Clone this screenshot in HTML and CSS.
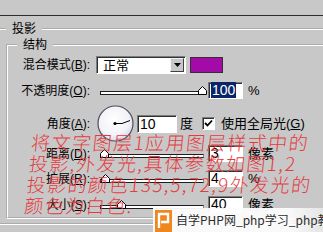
FILE: index.html
```html
<!DOCTYPE html>
<html lang="zh">
<head>
<meta charset="utf-8">
<title>投影</title>
<link rel="stylesheet" href="styles.css">
</head>
<body>
<div class="topbar"></div>
<fieldset class="outer">
  <legend>投影</legend>
  <fieldset class="inner">
    <legend>结构</legend>
    <div class="rows">
      <div class="row row-first">
        <span class="lbl">混合模式(<u>B</u>):</span>
        <div class="select"><span class="select-text">正常</span><span class="select-btn"><svg width="7" height="4" viewBox="0 0 7 4"><path d="M0 0h7L3.5 4z" fill="#000"/></svg></span></div>
        <span class="swatch"></span>
      </div>
      <div class="row">
        <span class="lbl">不透明度(<u>O</u>):</span>
        <div class="slider"><div class="track"></div><svg class="thumb" style="left:98px" width="9" height="9" viewBox="0 0 9 9"><path d="M0.5 8.5V4.5L4.5 0.5L8.5 4.5V8.5Z" fill="#fff" stroke="#000"/></svg></div>
        <div class="field"><span class="sel">100</span></div>
        <span class="unit">%</span>
      </div>
      <div class="row row-angle">
        <span class="lbl">角度(<u>A</u>):</span>
        <svg class="dial" width="37" height="37" viewBox="0 0 37 37">
          <defs><radialGradient id="g" cx="45%" cy="40%" r="60%"><stop offset="0" stop-color="#ffffff"/><stop offset="0.7" stop-color="#f3f3f8"/><stop offset="1" stop-color="#d8dae6"/></radialGradient></defs>
          <circle cx="18.5" cy="18.5" r="17.5" fill="url(#g)" stroke="#4a4e5e" stroke-width="1.2"/>
          <path d="M18 18.5H25L33 15.5" fill="none" stroke="#000" stroke-width="1"/>
          <circle cx="18" cy="18.5" r="1.6" fill="#000"/>
        </svg>
        <div class="field field-angle">10</div>
        <span class="unit unit-deg">度</span>
        <span class="check"><svg width="9" height="9" viewBox="0 0 9 9"><path d="M1 4l2.5 2.5L8 1.5" fill="none" stroke="#000" stroke-width="1.8"/></svg></span>
        <span class="check-lbl">使用全局光(<u>G</u>)</span>
      </div>
      <div class="row row-after-angle">
        <span class="lbl">距离(<u>D</u>):</span>
        <div class="slider"><div class="track"></div><svg class="thumb" style="left:0px" width="9" height="9" viewBox="0 0 9 9"><path d="M0.5 8.5V4.5L4.5 0.5L8.5 4.5V8.5Z" fill="#fff" stroke="#000"/></svg></div>
        <div class="field">3</div>
        <span class="unit">像素</span>
      </div>
      <div class="row">
        <span class="lbl">扩展(<u>R</u>):</span>
        <div class="slider"><div class="track"></div><svg class="thumb" style="left:1px" width="9" height="9" viewBox="0 0 9 9"><path d="M0.5 8.5V4.5L4.5 0.5L8.5 4.5V8.5Z" fill="#fff" stroke="#000"/></svg></div>
        <div class="field">4</div>
        <span class="unit">%</span>
      </div>
      <div class="row row-last">
        <span class="lbl">大小(<u>S</u>):</span>
        <div class="slider"><div class="track"></div><svg class="thumb" style="left:17px" width="9" height="9" viewBox="0 0 9 9"><path d="M0.5 8.5V4.5L4.5 0.5L8.5 4.5V8.5Z" fill="#fff" stroke="#000"/></svg></div>
        <div class="field">40</div>
        <span class="unit">像素</span>
      </div>
    </div>
  </fieldset>
</fieldset>
<div class="note">将文字图层1应用图层样式中的
投影,外发光,具体参数如图1,2
投影的颜色135,5,72,9外发光的
颜色为白色.</div>
<div class="wm">
  <svg class="wm-logo" width="17" height="22" viewBox="0 0 17 22"><rect width="17" height="22" fill="#f0861e"/><path d="M4 18V4h9v8H6" fill="none" stroke="#fff" stroke-width="2.4"/></svg>
  <span class="wm-text">自学PHP网_php学习_php教程</span>
</div>
</body>
</html>
```
FILE: styles.css
```css
html, body {
  margin: 0;
}
body {
  width: 323px;
  height: 232px;
  overflow: hidden;
  position: relative;
  background: #c8c8c8;
  color: #000;
  font: 12px/14px "Liberation Sans", "Noto Sans CJK SC", sans-serif;
}
.topbar {
  height: 15px;
  border-bottom: 1px solid #2e2e2e;
}
fieldset {
  border: 2px groove #ffffff;
  min-inline-size: 0;
}
legend {
  font-size: 12px;
  line-height: 14px;
  padding: 0 6px;
}
.outer {
  margin: 6px -10px 0 -2px;
  padding: 0 0 4px 6px;
}
.inner {
  margin: 2px 0 0 0;
  padding: 0 0 4px 9px;
}
.rows {
  display: flex;
  flex-direction: column;
}
.row {
  display: flex;
  align-items: center;
  height: 17px;
  margin-top: 8px;
}
.row-first {
  height: 18px;
  margin-top: 4px;
}
.row-angle {
  height: 37px;
  margin-top: 6px;
}
.row-after-angle {
  margin-top: 3px;
}
.row-last {
  margin-top: 9px;
}
.lbl {
  flex: none;
  width: 73px;
  text-align: right;
  white-space: nowrap;
}
.select {
  flex: none;
  display: flex;
  align-items: stretch;
  width: 90px;
  height: 18px;
  margin-left: 6px;
  box-sizing: border-box;
  background: #fff;
  border: 1px solid;
  border-color: #7c7c7c #ffffff #ffffff #7c7c7c;
  box-shadow: inset 1px 1px 0 #303030;
}
.select-text {
  flex: 1;
  padding: 1px 0 0 6px;
  font-size: 13px;
  line-height: 15px;
}
.select-btn {
  flex: none;
  width: 14px;
  margin: 1px 1px 1px 0;
  display: flex;
  align-items: center;
  justify-content: center;
  background: #c8c8c8;
  border: 1px solid;
  border-color: #f4f4f4 #404040 #404040 #f4f4f4;
  box-sizing: border-box;
}
.swatch {
  flex: none;
  width: 33px;
  height: 16px;
  margin-left: 4px;
  box-sizing: border-box;
  background: #a30ba8;
  border: 1px solid #3a2a3c;
}
.slider {
  flex: none;
  position: relative;
  width: 104px;
  height: 17px;
  margin-left: 10px;
  box-sizing: border-box;
  padding-top: 9px;
}
.track {
  height: 4px;
  box-sizing: border-box;
  background: #fff;
  border: 1px solid #1e1e1e;
  border-right-color: #8a8a8a;
}
.thumb {
  position: absolute;
  top: 4px;
}
.field {
  flex: none;
  width: 35px;
  height: 17px;
  margin-left: 4px;
  box-sizing: border-box;
  background: #fff;
  border: 1px solid;
  border-color: #7c7c7c #ffffff #ffffff #7c7c7c;
  box-shadow: inset 1px 1px 0 #303030;
  padding: 0 0 0 2px;
  font: 14px/15px "Liberation Sans", sans-serif;
}
.sel {
  background: #0a246a;
  color: #fff;
  padding: 0 1px;
}
.field-angle {
  width: 40px;
  height: 18px;
  margin-left: 3px;
  line-height: 16px;
}
.unit {
  flex: none;
  margin-left: 5px;
  font-size: 13px;
}
.unit-deg {
  margin-left: 3px;
}
.dial {
  flex: none;
  margin-left: 7px;
}
.check {
  flex: none;
  width: 13px;
  height: 13px;
  margin-left: 9px;
  box-sizing: border-box;
  display: flex;
  align-items: center;
  justify-content: center;
  background: #fff;
  border: 1px solid;
  border-color: #7c7c7c #ffffff #ffffff #7c7c7c;
  box-shadow: inset 1px 1px 0 #303030;
}
.check-lbl {
  margin-left: 6px;
  font-size: 13px;
  white-space: nowrap;
}
.note {
  position: absolute;
  left: 28px;
  top: 131px;
  color: #e63a3e;
  font: 300 19px/21px "Noto Sans CJK SC", sans-serif;
  letter-spacing: 1.5px;
  white-space: pre;
  transform: skewX(-6deg);
}
.wm {
  position: absolute;
  left: 153px;
  top: 208px;
  width: 170px;
  height: 24px;
  display: flex;
  align-items: flex-start;
  overflow: hidden;
  background: linear-gradient(to right, rgba(252, 252, 252, 0.95) 80%, rgba(252, 252, 252, 0.55));
}
.wm-logo {
  flex: none;
  margin: 2px 0 0 2px;
}
.wm-text {
  margin: 2px 0 0 4px;
  white-space: nowrap;
  color: #2c2c2c;
  font: 12px/19px "Noto Sans CJK SC", sans-serif;
}
```
